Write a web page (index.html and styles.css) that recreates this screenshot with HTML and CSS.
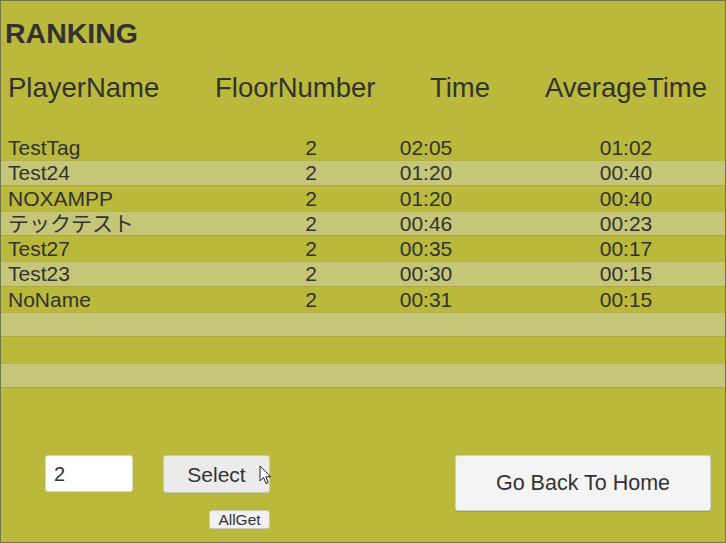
FILE: index.html
```html
<!DOCTYPE html>
<html>
<head>
<meta charset="utf-8">
<link rel="stylesheet" href="styles.css">
</head>
<body>
<div class="page">
  <div class="title">RANKING</div>
  <div class="head">
    <div class="h-name">PlayerName</div>
    <div class="h-floor">FloorNumber</div>
    <div class="h-time">Time</div>
    <div class="h-avg">AverageTime</div>
  </div>
  <div class="rows">
    <div class="row"><span class="c-name">TestTag</span><span class="c-floor">2</span><span class="c-time">02:05</span><span class="c-avg">01:02</span></div>
    <div class="row alt"><span class="c-name">Test24</span><span class="c-floor">2</span><span class="c-time">01:20</span><span class="c-avg">00:40</span></div>
    <div class="row"><span class="c-name">NOXAMPP</span><span class="c-floor">2</span><span class="c-time">01:20</span><span class="c-avg">00:40</span></div>
    <div class="row alt"><span class="c-name">テックテスト</span><span class="c-floor">2</span><span class="c-time">00:46</span><span class="c-avg">00:23</span></div>
    <div class="row"><span class="c-name">Test27</span><span class="c-floor">2</span><span class="c-time">00:35</span><span class="c-avg">00:17</span></div>
    <div class="row alt"><span class="c-name">Test23</span><span class="c-floor">2</span><span class="c-time">00:30</span><span class="c-avg">00:15</span></div>
    <div class="row"><span class="c-name">NoName</span><span class="c-floor">2</span><span class="c-time">00:31</span><span class="c-avg">00:15</span></div>
    <div class="row alt"></div>
    <div class="row"></div>
    <div class="row alt"></div>
  </div>
  <div class="footer">
    <div class="controls">
      <div class="input">2</div>
      <div class="select-col">
        <div class="btn select">Select
          <svg class="cursor" width="13" height="20" viewBox="0 0 13 20"><path d="M1 1 L1 16 L4.5 12.5 L7 18.5 L9.2 17.6 L6.8 11.8 L11.6 11.8 Z" fill="#fff" stroke="#222" stroke-width="1" stroke-linejoin="round"/></svg>
        </div>
        <div class="btn allget">AllGet</div>
      </div>
    </div>
    <div class="btn home">Go Back To Home</div>
  </div>
</div>
</body>
</html>
```
FILE: styles.css
```css
* { box-sizing: border-box; }
html, body { margin: 0; padding: 0; }
body {
  font-family: "Liberation Sans", Arial, "Noto Sans CJK JP", sans-serif;
  color: #323232;
}
.page {
  width: 726px;
  height: 543px;
  border: 1px solid #6f7648;
  background: #bab93b;
  overflow: hidden;
}
.title {
  margin-top: 16px;
  padding-left: 4px;
  font-size: 28.5px;
  font-weight: bold;
  line-height: 32px;
  height: 32px;
}
.head {
  margin-top: 23px;
  display: grid;
  grid-template-columns: 214px 160px 25px 120px 6px 200px;
  font-size: 27.5px;
  line-height: 31px;
  height: 31px;
  white-space: nowrap;
}
.h-name { padding-left: 7px; }
.h-floor { grid-column: 2; text-align: center; }
.h-time { grid-column: 4; text-align: center; }
.h-avg { grid-column: 6; text-align: center; }
.rows { margin-top: 32px; }
.row {
  display: grid;
  grid-template-columns: 259px 102px 128px 36px 200px;
  height: 25.3px;
  font-size: 21px;
  line-height: 25.3px;
  white-space: nowrap;
}
.row.alt {
  background: #c6c679;
  box-shadow: inset 0 1px 0 #b3b14a, inset 0 -1px 0 #a9a842;
}
.c-name { padding-left: 7px; }
.c-floor { text-align: center; }
.c-time { text-align: center; }
.c-avg { grid-column: 5; text-align: center; }
.footer {
  margin-top: 67px;
  display: flex;
  align-items: flex-start;
  padding-left: 44px;
  padding-right: 14px;
}
.controls {
  display: flex;
  align-items: flex-start;
  gap: 30px;
}
.input {
  width: 88px;
  height: 37px;
  background: #fff;
  border: 1px solid #d6d6c4;
  border-radius: 3px;
  font-size: 20px;
  line-height: 36px;
  padding-left: 8px;
}
.select-col {
  display: flex;
  flex-direction: column;
  align-items: flex-end;
  gap: 17px;
}
.btn {
  border: 1px solid #c9c9b5;
  border-radius: 3px;
  text-align: center;
  color: #333;
}
.select {
  position: relative;
  width: 107px;
  height: 38px;
  background: #ebebeb;
  font-size: 21px;
  line-height: 38px;
}
.cursor {
  position: absolute;
  left: 95px;
  top: 9px;
}
.allget {
  width: 61px;
  height: 19px;
  background: #f1f1f1;
  font-size: 15.5px;
  line-height: 17px;
}
.home {
  margin-left: auto;
  width: 256px;
  height: 56px;
  background: #f4f4f4;
  font-size: 21.5px;
  line-height: 55px;
  border-color: #d2d2c0;
  box-shadow: 0 1px 0 #9a9a70;
}
```
